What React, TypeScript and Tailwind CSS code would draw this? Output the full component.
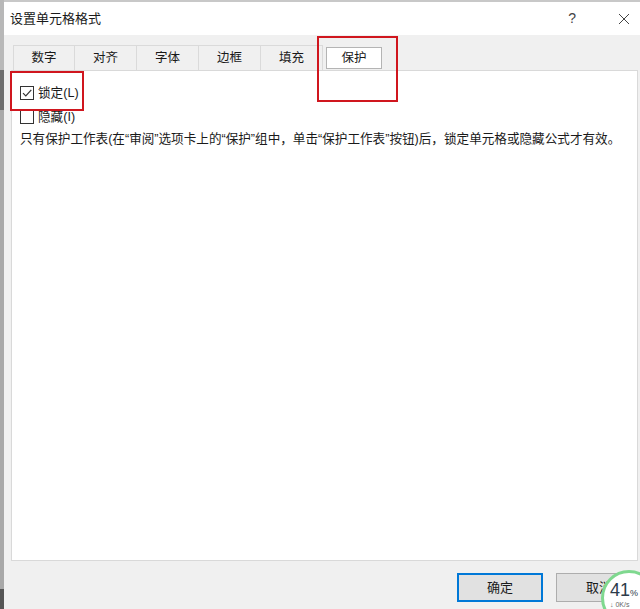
import React from "react";

const font = { fontFamily: '"Liberation Sans", "Noto Sans CJK SC", sans-serif' };

const tabs = ["数字", "对齐", "字体", "边框", "填充", "保护"];

function CheckBox({ checked }: { checked?: boolean }) {
  return (
    <span className="w-[14px] h-[14px] border border-[#333] bg-white flex items-center justify-center">
      {checked && (
        <svg width="12" height="12" viewBox="0 0 12 12">
          <path d="M2 6.2 L4.8 9 L10.3 2.8" fill="none" stroke="#333" strokeWidth="1.2" />
        </svg>
      )}
    </span>
  );
}

export default function App() {
  return (
    <div className="w-[640px] h-[609px] relative overflow-hidden flex bg-[#f0f0f0] text-[#1a1a1a]" style={font}>
      <div className="w-[4px] shrink-0 h-full bg-[#9c9c9c] flex flex-col">
        <div className="h-[70px] bg-[#b8b8b8]" />
        <div className="h-[40px] bg-[#6e6e6e]" />
        <div className="flex-1 bg-[#a8a8a8]" />
        <div className="h-[20px] bg-[#555]" />
      </div>
      <div className="flex-1 min-w-0 flex flex-col border-t-[2px] border-[#c8c8c8]">
        {/* title bar */}
        <div className="h-[33px] bg-white flex items-center pl-[6px] pr-[10px]">
          <span className="text-[13px]">设置单元格格式</span>
          <span className="ml-auto text-[14px] text-[#444] mr-[42px]">?</span>
          <svg width="12" height="12" viewBox="0 0 12 12">
            <path d="M1 1 L11 11 M11 1 L1 11" stroke="#444" strokeWidth="1" />
          </svg>
        </div>
        {/* tabs */}
        <div className="h-[35px] flex items-end pl-[9px]">
          {tabs.map((t, i) =>
            i === 5 ? (
              <div key={t} className="w-[62px] h-[25px] flex items-center justify-center px-[3px] pt-[2px] pb-[1px]">
                <div className="w-full h-full bg-white border border-[#b4b4b4] flex items-center justify-center text-[12.5px]">
                  {t}
                </div>
              </div>
            ) : (
              <div
                key={t}
                className="w-[62px] h-[25px] border-t border-r border-[#dadada] flex items-center justify-center text-[12.5px] first:border-l"
              >
                {t}
              </div>
            )
          )}
        </div>
        {/* panel */}
        <div className="flex-1 min-w-0 overflow-hidden bg-white border border-[#d9d9d9] ml-[7px] mr-[2px] flex flex-col pl-[8px] pt-[14px] text-[12.6px]">
          <label className="flex items-center gap-[4px] h-[16px]">
            <CheckBox checked />
            <span>锁定(L)</span>
          </label>
          <label className="flex items-center gap-[4px] h-[16px] mt-[8px]">
            <CheckBox />
            <span>隐藏(I)</span>
          </label>
          <p className="mt-[5px] whitespace-nowrap">
            只有保护工作表(在“审阅”选项卡上的“保护”组中，单击“保护工作表”按钮)后，锁定单元格或隐藏公式才有效。
          </p>
        </div>
        {/* buttons */}
        <div className="h-[48px] flex items-start pt-[12px] pl-[453px] gap-[13px]">
          <button className="w-[86px] h-[29px] shrink-0 bg-[#e1e1e1] border-2 border-[#0078d7] text-[13px]">确定</button>
          <button className="w-[86px] h-[29px] shrink-0 bg-[#e1e1e1] border border-[#adadad] text-[13px]">取消</button>
        </div>
      </div>

      {/* red highlight boxes */}
      <div className="absolute left-[10px] top-[71px] w-[74px] h-[40px] border-2 border-[#d0161e]" />
      <div className="absolute left-[317px] top-[36px] w-[81px] h-[66px] border-2 border-[#d0161e]" />

      {/* floating net-speed widget */}
      <div className="absolute left-[601px] top-[570px] w-[56px] h-[56px] rounded-full bg-white border-[3px] border-[#7fd88f] flex flex-col pl-[6px] pt-[8px]">
        <span className="text-[18px] leading-none text-[#2d3b4a] whitespace-nowrap">
          41<span className="text-[9px]">%</span>
        </span>
        <span className="text-[7px] leading-none text-[#666] mt-[2px]">↓ 0K/s</span>
      </div>
    </div>
  );
}
